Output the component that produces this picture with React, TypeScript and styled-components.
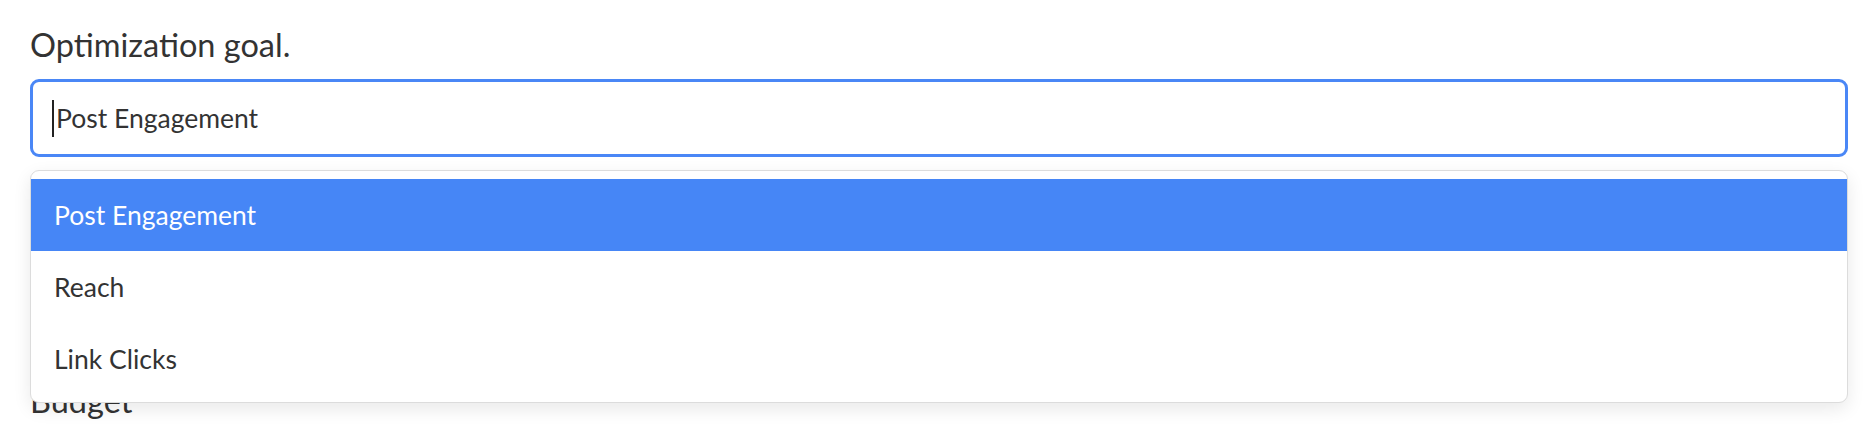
import React from "react";
import styled, { createGlobalStyle } from "styled-components";

const GlobalStyle = createGlobalStyle`
  html, body {
    margin: 0;
    padding: 0;
    background: #ffffff;
  }
  body {
    font-family: Lato, "Open Sans", "Liberation Sans", sans-serif;
    color: #333333;
  }
`;

const Page = styled.div`
  padding: 25px 26px 0 30px;
  height: 428px;
  box-sizing: border-box;
  overflow: hidden;
`;

const FormGroup = styled.div`
  margin-bottom: 46px;
`;

const Label = styled.label`
  display: block;
  font-size: 32.5px;
  line-height: 40px;
  color: #333333;
  margin-bottom: 14px;
  white-space: pre;
`;

const SelectWrap = styled.div`
  position: relative;
`;

const InputBox = styled.div<{ $focused?: boolean }>`
  box-sizing: border-box;
  height: 78px;
  display: flex;
  align-items: center;
  padding-left: 19px;
  border-radius: 9px;
  border: ${(p) => (p.$focused ? "3px solid #4a87f6" : "2px solid #d6d6d6")};
  background: #ffffff;
  font-size: 26.5px;
  color: #333333;
`;

const Caret = styled.span`
  display: inline-block;
  width: 2px;
  height: 37px;
  background: #222222;
  margin-right: 2px;
`;

const Menu = styled.ul`
  position: absolute;
  top: calc(100% + 13px);
  left: 0;
  right: 0;
  margin: 0;
  padding: 8px 0 7px;
  list-style: none;
  background: #ffffff;
  border: 1.5px solid #dcdcdc;
  border-radius: 9px;
  box-shadow: 0 6px 18px rgba(0, 0, 0, 0.09);
  z-index: 10;
`;

const Option = styled.li<{ $active?: boolean }>`
  height: 72px;
  display: flex;
  align-items: center;
  padding-left: 23px;
  font-size: 26.5px;
  color: ${(p) => (p.$active ? "#ffffff" : "#333333")};
  background: ${(p) => (p.$active ? "#4686f6" : "transparent")};
`;

const options = ["Post Engagement", "Reach", "Link Clicks"];

export default function App() {
  return (
    <>
      <GlobalStyle />
      <Page>
        <FormGroup>
          <Label>Optimization goal.</Label>
          <SelectWrap>
            <InputBox $focused>
              <Caret />
              Post Engagement
            </InputBox>
            <Menu>
              {options.map((o, i) => (
                <Option key={o} $active={i === 0}>
                  {o}
                </Option>
              ))}
            </Menu>
          </SelectWrap>
        </FormGroup>
        <FormGroup>
          <Label>{" "}</Label>
          <InputBox />
        </FormGroup>
        <FormGroup>
          <Label>Budget</Label>
        </FormGroup>
      </Page>
    </>
  );
}
